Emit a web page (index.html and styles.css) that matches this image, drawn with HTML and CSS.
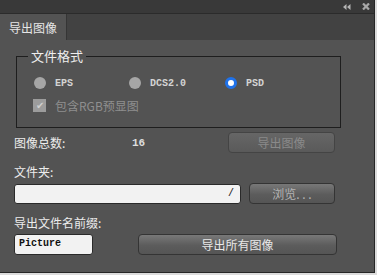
FILE: index.html
```
<!DOCTYPE html>
<html lang="zh-CN">
<head>
<meta charset="utf-8"/>
<title>导出图像</title>
<link rel="stylesheet" href="styles.css">
</head>
<body>
<section class="panel">
    <div class="titlebar">
        <svg class="ico" width="8" height="6" viewBox="0 0 8 6"><path d="M0 3 L3.5 0 V6 Z M4 3 L7.5 0 V6 Z" fill="#b4b4b4"/></svg>
        <svg class="ico" width="8" height="7" viewBox="0 0 8 7"><path d="M1 0.5 L7 6.5 M7 0.5 L1 6.5" stroke="#a8a8a8" stroke-width="2.2"/></svg>
    </div><!-- titlebar -->

    <div class="tabs">
        <div class="tab">导出图像</div>
    </div><!-- tabs -->

    <div class="content">
        <fieldset class="format">
            <legend>文件格式</legend>
            <div class="radios">
                <label class="opt"><span class="radio"></span><span class="mono">EPS</span></label>
                <label class="opt"><span class="radio"></span><span class="mono">DCS2.0</span></label>
                <label class="opt"><span class="radio on"></span><span class="mono">PSD</span></label>
            </div>
            <label class="opt check_row"><span class="check">&#10004;</span><span class="dim">包含RGB预显图</span></label>
        </fieldset>

        <div class="row stats">
            <span class="stat_lbl">图像总数:</span>
            <span class="stat_num">16</span>
            <button class="btn btn_export off">导出图像</button>
        </div>

        <div class="lbl">文件夹:</div>
        <div class="row">
            <div class="field folder">/</div>
            <button class="btn btn_browse">浏览. . .</button>
        </div>

        <div class="lbl">导出文件名前缀:</div>
        <div class="row">
            <div class="field prefix">Picture</div>
            <button class="btn btn_all">导出所有图像</button>
        </div>
    </div><!-- content -->
</section>
</body>
</html>
```
FILE: styles.css
```
*{margin:0;padding:0;box-sizing:border-box;}
body{
    background:#dcdcdc;
    font-family:"Noto Sans CJK SC",sans-serif;font-size:12px;}

.panel{
    display:flex;flex-direction:column;
    width:375px;height:273px;
    background:#535353;
    border-right:1px solid #262626;
    border-bottom:1px solid #262626;}

/* top strip */
.titlebar{
    display:flex;justify-content:flex-end;align-items:center;gap:11px;
    height:14px;
    padding-right:4px;
    background:#393939;
    border-bottom:1px solid #2b2b2b;}

.tabs{
    display:flex;
    height:26px;
    background:#424242;}

.tab{
    display:flex;justify-content:center;align-items:center;
    width:67px;
    background:#535353;
    border-right:1px solid #353535;
    color:#e6e6e6;}

/* body */
.content{
    flex:1;
    padding:8px 0 0 14px;
    color:#ececec;}

.format{
    width:325px;
    margin-left:2px;
    padding:12px 0 15px 17px;
    border:1px solid #1e1e1e;}

.format legend{
    margin-left:-6px;
    padding:0 3px;
    font-size:13px;line-height:16px;
    color:#eeeeee;}

.radios{
    display:grid;
    grid-template-columns:95px 96px auto;
    height:14px;}

.opt{display:flex;align-items:center;gap:9px;height:14px;}

.mono{
    font-family:"Liberation Mono",monospace;font-size:10px;font-weight:bold;
    color:#d4d4d4;}

.radio{
    width:12px;height:12px;
    border-radius:50%;
    background:#a6a6a6;}
.radio.on{
    background:#fff;
    border:3px solid #1f72ea;}

.check_row{margin-top:8px;margin-left:-1px;gap:9px;}
.check{
    display:flex;justify-content:center;align-items:center;
    width:13px;height:13px;
    background:#9c9c9c;
    color:#cfcfcf;font-size:10px;line-height:1;}
.dim{color:#8f8f8f;}

.row{display:flex;align-items:center;}

.stats{margin-top:4px;height:21px;width:321px;}
.stat_lbl{width:118px;}
.stat_num{font-family:"Liberation Mono",monospace;font-size:11px;font-weight:bold;color:#dddddd;}

.lbl{margin-top:11px;line-height:16px;}
.lbl + .row{margin-top:3px;}
.lbl:last-of-type{margin-top:4px;}

.btn{
    height:21px;
    font-family:inherit;font-size:12px;
    color:#e8e8e8;
    background:linear-gradient(#787878,#5c5c5c 55%,#555);
    border:1px solid #343434;
    border-radius:4px;}
.btn.off{color:#8a8a8a;background:linear-gradient(#666,#5a5a5a);border-color:#444;}

.btn_export{width:107px;margin-left:auto;}
.btn_browse{width:86px;margin-left:8px;color:#b4b4b4;}
.btn_all{width:199px;margin-left:45px;}

.field{
    height:20px;
    background:#f2f2f2;
    border:1px solid #2a2a2a;
    border-radius:3px;
    font-family:"Liberation Mono",monospace;font-size:10px;line-height:18px;
    color:#111;}
.folder{width:227px;text-align:right;padding-right:6px;}
.prefix{width:79px;height:21px;padding-left:4px;font-weight:bold;}
```
